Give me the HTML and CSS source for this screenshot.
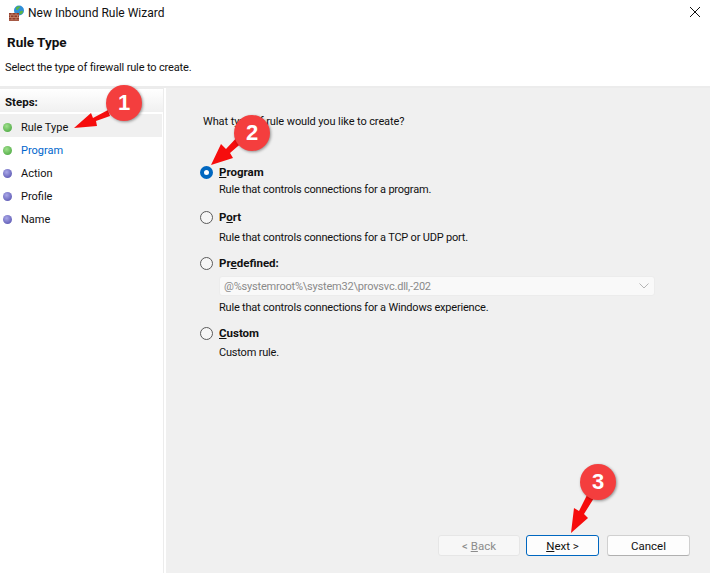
FILE: index.html
```html
<!DOCTYPE html>
<html lang="en">
<head>
<meta charset="utf-8">
<title>New Inbound Rule Wizard</title>
<link rel="stylesheet" href="styles.css">
</head>
<body>
<div class="window">
  <header class="titlebar">
    <svg class="app-icon" width="18" height="18" viewBox="0 0 18 18">
      <circle cx="12" cy="6.500" r="5" fill="#2f8fd8"/>
      <path d="M9 3.500c1.500-1.500 3-1.500 4-1 .5 1-1 1.500-1.500 2.500-.5 1.200-2 1-2.500.5zM12.500 7.500c1-.5 3-1 3.500-.5 0 2-1.500 3.500-2.500 3.500-.5-1-1.500-2-1-3z" fill="#5cb544"/>
      <rect x="2" y="9" width="10" height="8" fill="#8f3b2b"/>
      <path d="M2 11h10M2 13.500h10M2 16h10M5 9v2M9 9v2M3.500 11v2.500M7 11v2.500M10.500 11v2.500M5 13.500V16M9 13.500V16" stroke="#c98a70" stroke-width=".8" fill="none"/>
    </svg>
    <span class="title">New Inbound Rule Wizard</span>
    <svg class="close" width="10" height="10" viewBox="0 0 10 10"><path d="M0 0l10 10M10 0L0 10" stroke="#111" stroke-width="1" fill="none"/></svg>
  </header>
  <section class="heading">
    <h1>Rule Type</h1>
    <p>Select the type of firewall rule to create.</p>
  </section>
  <div class="body">
    <nav class="steps">
      <div class="steps-label">Steps:</div>
      <ul>
        <li class="step current"><i class="dot green"></i>Rule Type</li>
        <li class="step link"><i class="dot green"></i>Program</li>
        <li class="step"><i class="dot purple"></i>Action</li>
        <li class="step"><i class="dot purple"></i>Profile</li>
        <li class="step"><i class="dot purple"></i>Name</li>
      </ul>
    </nav>
    <main class="content">
      <p class="question">What type of rule would you like to create?</p>
      <div class="options">
        <div class="option opt-program">
          <div class="opt-head"><i class="radio checked"></i><b><u>P</u>rogram</b></div>
          <p class="desc">Rule that controls connections for a program.</p>
        </div>
        <div class="option opt-port">
          <div class="opt-head"><i class="radio"></i><b>P<u>o</u>rt</b></div>
          <p class="desc">Rule that controls connections for a TCP or UDP port.</p>
        </div>
        <div class="option opt-predefined">
          <div class="opt-head"><i class="radio"></i><b>Pr<u>e</u>defined:</b></div>
          <div class="combo"><span>@%systemroot%\system32\provsvc.dll,-202</span>
            <svg width="10" height="6" viewBox="0 0 10 6"><path d="M.5.5L5 5 9.500.5" stroke="#b4b4b4" fill="none"/></svg>
          </div>
          <p class="desc">Rule that controls connections for a Windows experience.</p>
        </div>
        <div class="option opt-custom">
          <div class="opt-head"><i class="radio"></i><b><u>C</u>ustom</b></div>
          <p class="desc">Custom rule.</p>
        </div>
      </div>
      <footer class="buttons">
        <button class="btn disabled">&lt; <u>B</u>ack</button>
        <button class="btn primary"><u>N</u>ext &gt;</button>
        <button class="btn cancel">Cancel</button>
      </footer>
    </main>
  </div>
</div>

<svg class="arrows" width="710" height="573" viewBox="0 0 710 573">
  <path d="M74 128L91 113L93 118L108 110L110 116L96 121L97 126Z" fill="#f60d0d"/>
  <path d="M211 165L221 144L226 149L240 134L245 140L230 153L233 158Z" fill="#f60d0d"/>
  <path d="M571 533L574 508L579 511L587 495L594 498L584 514L588 518Z" fill="#f60d0d"/>
</svg>
<div class="badge b1">1</div>
<div class="badge b2">2</div>
<div class="badge b3">3</div>
</body>
</html>
```
FILE: styles.css
```css
* { box-sizing: border-box; }
html, body { margin: 0; padding: 0; }
body {
  position: relative;
  width: 710px;
  height: 573px;
  overflow: hidden;
  background: #fff;
  font-family: Roboto, "Liberation Sans", sans-serif;
  font-size: 11px;
  color: #111;
}
.window { display: flex; flex-direction: column; height: 573px; }
.titlebar { display: flex; align-items: center; height: 24px; padding: 2px 10px 0 7px; flex: none; }
.app-icon { flex: none; margin-right: 3px; }
.title { flex: 1; font-size: 12px; }
.close { flex: none; margin-top: -3px; }
.heading { height: 64px; flex: none; padding: 10px 0 0 7px; border-bottom: 2px solid #ececec; }
.heading h1 { margin: 0; font-size: 13.500px; font-weight: 700; line-height: 16px; }
.heading p { margin: 10px 0 0 -2px; line-height: 15px; letter-spacing: -.15px; }
.body { flex: 1; display: flex; min-height: 0; }
.steps { width: 164px; flex: none; border-right: 1px solid #ececec; margin-right: 2px; }
.steps-label { height: 24px; margin-bottom: 2px; padding: 6px 0 0 5px; font-size: 11.500px; font-weight: 700; line-height: 15px; background: linear-gradient(#fff, #f0f0f0); border-top: 1px solid #ececec; }
.steps ul { list-style: none; margin: 0; padding: 0; }
.step { display: flex; align-items: center; height: 23px; width: 162px; padding: 4px 0 0 3px; }
.step.current { background: #f0f0f0; }
.step.link { color: #0066cc; }
.dot { width: 9px; height: 9px; border-radius: 50%; margin-right: 9px; flex: none; }
.dot.green { background: radial-gradient(circle at 40% 35%, #9fe08c, #3f9f36); }
.dot.purple { background: radial-gradient(circle at 40% 35%, #aaa8e8, #4c48a8); }
.content { flex: 1; position: relative; display: flex; flex-direction: column; background: #f0f0f0; padding: 26px 20px 17px 34px; min-width: 0; }
.question { margin: 0; line-height: 15px; padding-left: 3px; letter-spacing: -.1px; }
.options { flex: 1; padding-top: 35px; }
.opt-head { display: flex; align-items: center; height: 16px; font-size: 11.500px; font-weight: 700; }
.opt-head b { font-weight: 700; }
.radio { width: 13px; height: 13px; border-radius: 50%; border: 1px solid #5a5a5a; background: #f6f6f6; margin-right: 6px; flex: none; }
.radio.checked { border: 4px solid #0067c0; background: #fff; }
.desc { margin: 2px 0 0 19px; line-height: 15px; letter-spacing: -.2px; }
.opt-program { height: 45px; }
.opt-port { height: 46px; }
.opt-port .desc { margin-top: 5px; }
.opt-predefined { height: 70px; }
.opt-custom .desc { margin-top: 4px; }
.combo { display: flex; align-items: center; justify-content: space-between; height: 20px; margin: 5px 35px 0 19px; padding: 0 5px 0 4px; background: #f9f9f9; border: 1px solid #ececec; border-radius: 3px; color: #8a8a8a; letter-spacing: -.2px; }
.combo + .desc { margin-top: 4px; }
.buttons { display: flex; justify-content: flex-end; }
.btn { height: 21px; padding: 0; font: inherit; font-size: 11.500px; border-radius: 3px; background: #fdfdfd; border: 1px solid #d0d0d0; color: #111; }
.btn.disabled { width: 82px; margin-right: 6px; background: #f7f7f7; border-color: #e6e6e6; color: #8c8c8c; }
.btn.primary { width: 73px; margin-right: 8px; border-color: #0067c0; }
.btn.cancel { width: 83px; border-bottom-color: #b0b0b0; }
.arrows { position: absolute; left: 0; top: 0; pointer-events: none; }
.badge { position: absolute; width: 36px; height: 36px; border-radius: 50%; background: #f43e3e; color: #fff; font: 700 22px/36px "Liberation Sans", sans-serif; text-align: center; box-shadow: 1px 1px 3px rgba(0,0,0,.4); }
.b1 { left: 106px; top: 85px; }
.b2 { left: 234px; top: 115px; }
.b3 { left: 580px; top: 464px; }
```
